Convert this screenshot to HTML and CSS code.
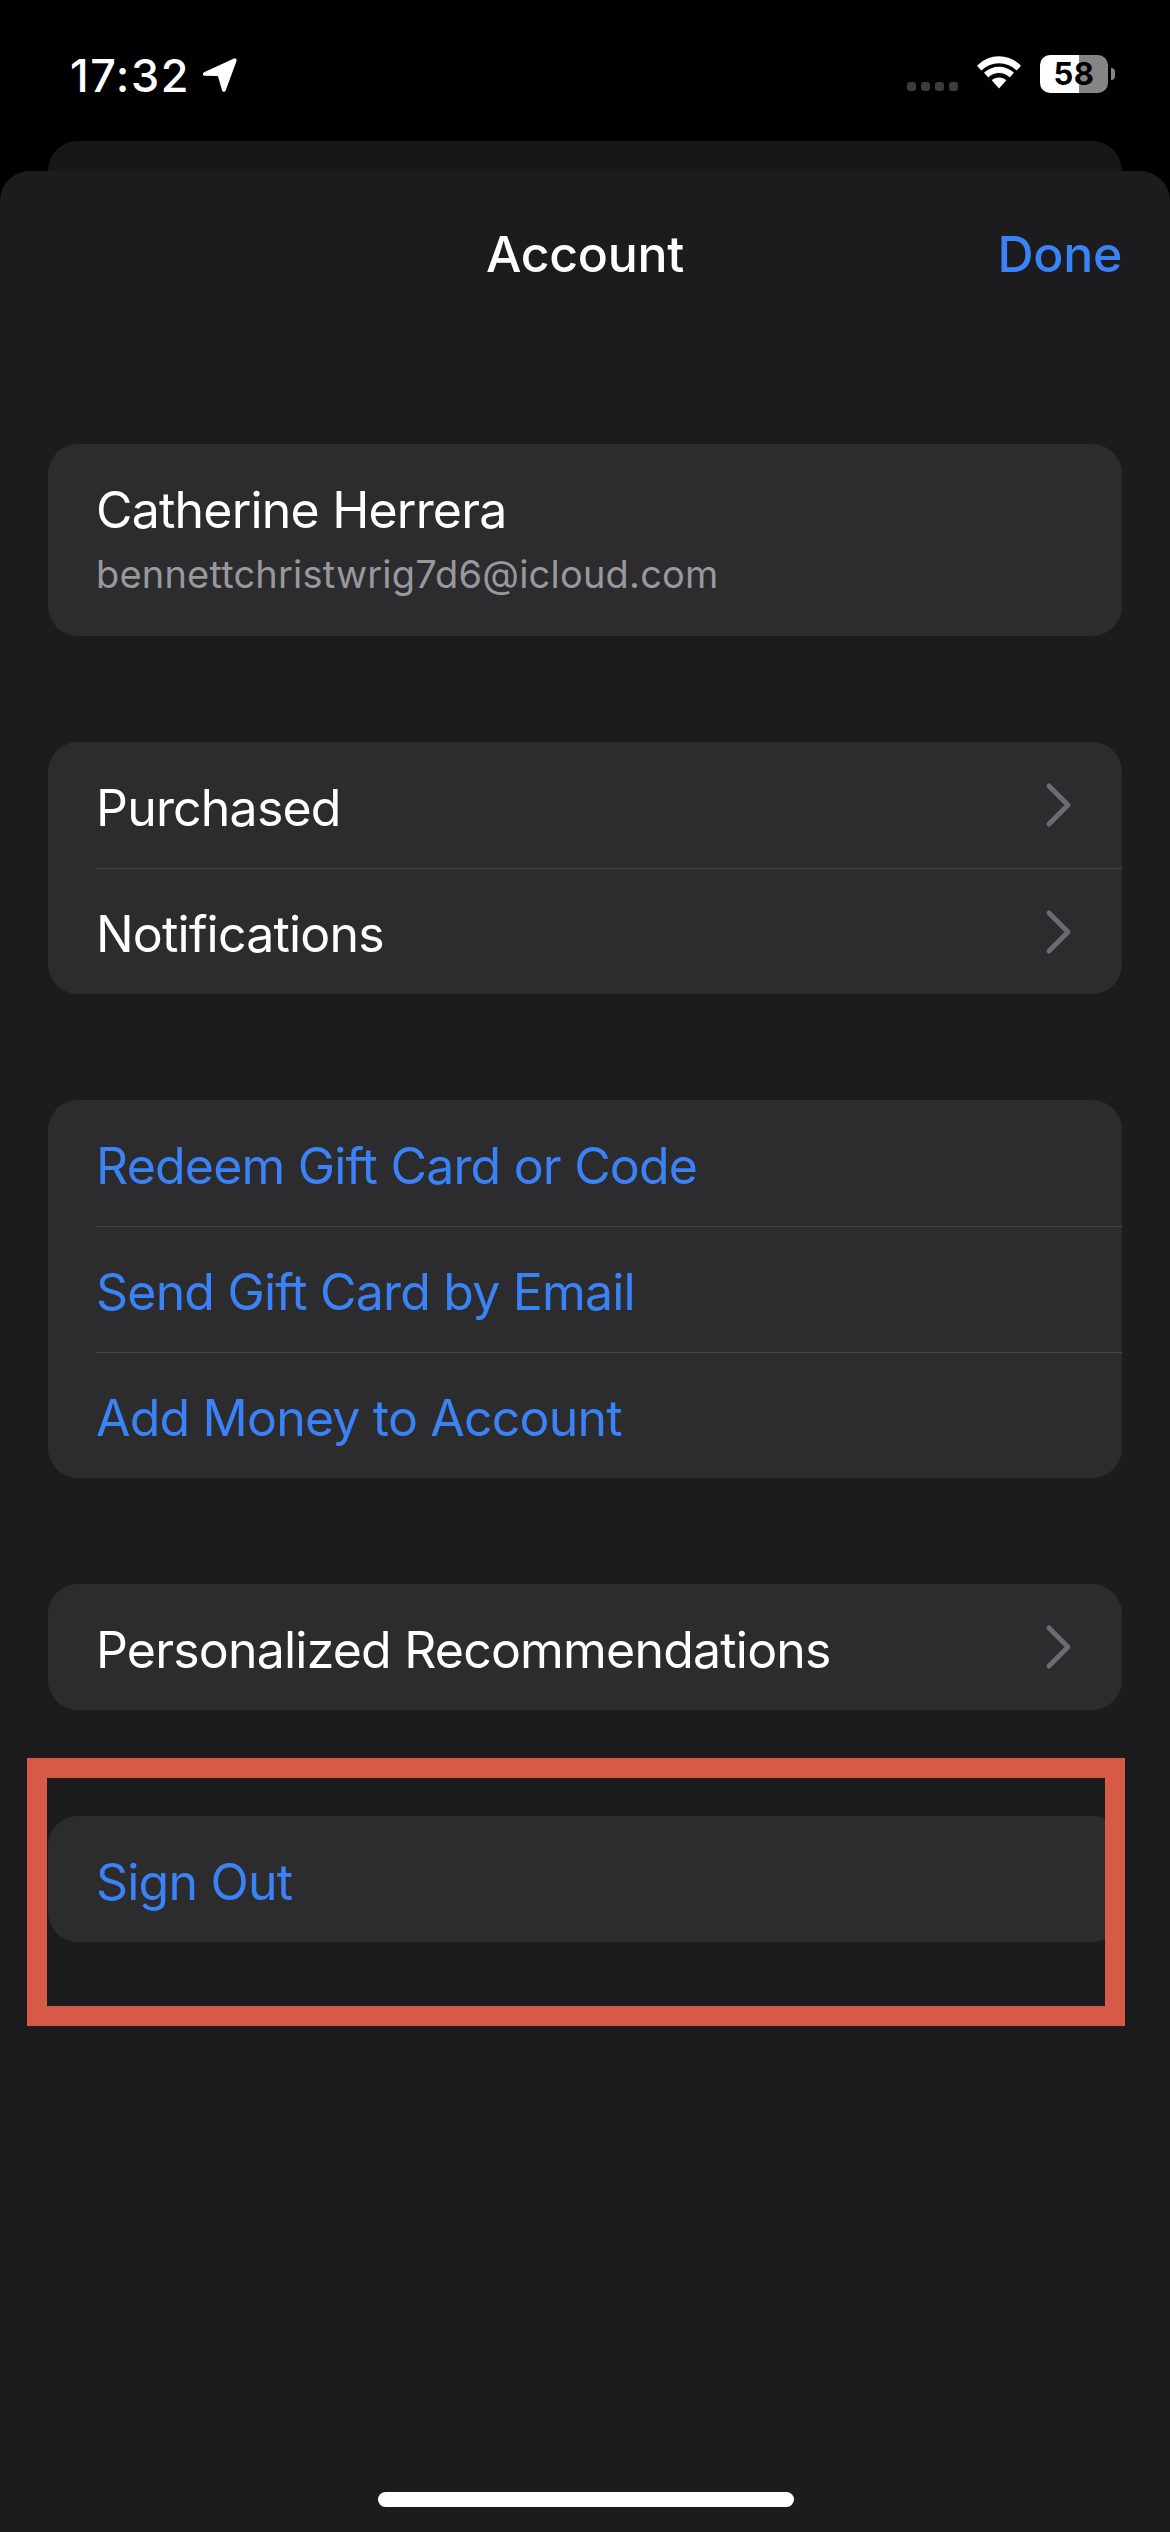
FILE: index.html
```html
<!DOCTYPE html>
<html lang="en">
<head>
<meta charset="utf-8">
<title>Account</title>
<link rel="stylesheet" href="styles.css">
</head>
<body>
<div class="status">
  <div class="status-left">
    <span class="time">17:32</span>
    <svg class="loc" viewBox="0 0 36 36"><path d="M33 1.500 3 15.200c-1.800.9-1.300 3.400.7 3.500l12.400.4c.6 0 1 .4 1.100 1l3.800 13.200c.5 1.900 3 2 3.700.2L35.500 4c.6-1.700-.9-3.200-2.500-2.500z" fill="#fff"/></svg>
  </div>
  <div class="status-right">
    <div class="dots"><i></i><i></i><i></i><i></i></div>
    <svg class="wifi" viewBox="0 0 48 36"><path d="M24 7.500c6.800 0 13 2.700 17.600 7l3.400-3.800C39.500 5.400 32.100 2 24 2S8.500 5.400 3 10.700l3.400 3.800c4.600-4.300 10.800-7 17.600-7z" fill="#fff" stroke="#fff" stroke-width="1.500" stroke-linejoin="round"/><path d="M24 17.500c4.100 0 7.800 1.500 10.700 4.100l3.400-3.800C34.300 14.400 29.400 12.300 24 12.300s-10.300 2.100-14.100 5.500l3.400 3.800c2.900-2.600 6.600-4.100 10.700-4.100z" fill="#fff" stroke="#fff" stroke-width="1.200" stroke-linejoin="round"/><path d="M24 22.500c-2.800 0-5.300 1-7.300 2.700L24 33.500l7.300-8.300c-2-1.700-4.500-2.700-7.300-2.700z" fill="#fff"/></svg>
    <div class="battery">
      <div class="batt-body"><span class="batt-num">58</span></div>
      <div class="batt-tip"></div>
    </div>
  </div>
</div>
<div class="back-card"></div>
<main class="sheet">
  <header class="nav">
    <h1 class="nav-title">Account</h1>
    <span class="nav-done">Done</span>
  </header>

  <section class="card card-profile">
    <div class="name">Catherine Herrera</div>
    <div class="email">bennettchristwrig7d6@icloud.com</div>
  </section>

  <section class="card">
    <div class="row"><span class="label">Purchased</span>
      <svg class="chev" viewBox="0 0 28 48"><path d="M4 5l19 19L4 43" /></svg></div>
    <div class="row"><span class="label">Notifications</span>
      <svg class="chev" viewBox="0 0 28 48"><path d="M4 5l19 19L4 43" /></svg></div>
  </section>

  <section class="card">
    <div class="row"><span class="label link">Redeem Gift Card or Code</span></div>
    <div class="row"><span class="label link">Send Gift Card by Email</span></div>
    <div class="row"><span class="label link">Add Money to Account</span></div>
  </section>

  <section class="card">
    <div class="row"><span class="label">Personalized Recommendations</span>
      <svg class="chev" viewBox="0 0 28 48"><path d="M4 5l19 19L4 43" /></svg></div>
  </section>

  <section class="card card-signout">
    <div class="row"><span class="label link">Sign Out</span></div>
  </section>

  <div class="highlight"></div>
  <div class="home-bar"></div>
</main>
</body>
</html>
```
FILE: styles.css
```css
* { box-sizing: border-box; }
html, body { margin: 0; padding: 0; }
body {
  width: 1170px;
  height: 2532px;
  background: #000;
  font-family: Inter, "Noto Sans", sans-serif;
  color: #fff;
  display: flex;
  flex-direction: column;
  overflow: hidden;
}
.status {
  height: 141px;
  flex: none;
  display: flex;
  justify-content: space-between;
  padding: 52px 55px 0 70px;
}
.status-left { display: flex; align-items: flex-start; gap: 11px; }
.time { font-size: 45px; line-height: 47px; font-weight: 500; letter-spacing: 1.500px; }
.loc { width: 36px; height: 36px; margin-top: 5px; }
.status-right { display: flex; align-items: flex-start; }
.dots { display: flex; gap: 5px; margin-top: 30px; margin-right: 17px; }
.dots i { width: 9px; height: 9px; border-radius: 3px; background: #3c3c3c; }
.wifi { width: 48px; height: 36px; margin-top: 3px; margin-right: 17px; }
.battery { display: flex; align-items: center; margin-top: 3px; }
.batt-body {
  width: 68px;
  height: 38px;
  border-radius: 10px;
  background: linear-gradient(90deg, #fff 0, #fff 57.500%, #858585 57.500%, #858585 100%);
  display: flex;
  align-items: center;
  justify-content: center;
}
.batt-num { font-size: 31px; line-height: 38px; font-weight: 700; color: #000; letter-spacing: 0.500px; }
.batt-tip { width: 4px; height: 12px; margin-left: 3px; border-radius: 0 6px 6px 0; background: #858585; }

.back-card {
  flex: none;
  height: 30px;
  margin: 0 48px;
  background: #171718;
  border-radius: 30px 30px 0 0;
}
.sheet {
  flex: 1;
  position: relative;
  background: #1c1c1e;
  border-radius: 30px 30px 0 0;
  padding: 0 48px;
  display: flex;
  flex-direction: column;
}
.nav {
  height: 273px;
  flex: none;
  position: relative;
  display: flex;
  justify-content: center;
  padding-top: 53px;
}
.nav-title { margin: 0; font-size: 50px; line-height: 60px; font-weight: 500; letter-spacing: -0.300px; }
.nav-done {
  position: absolute;
  right: 0;
  top: 53px;
  font-size: 50px;
  line-height: 60px;
  font-weight: 500;
  letter-spacing: -0.300px;
  color: #3b82f6;
}
.card {
  background: #2c2c2e;
  border-radius: 30px;
  margin-bottom: 106px;
  overflow: hidden;
}
.card-profile { height: 192px; padding: 36px 48px 0; }
.name { font-size: 50px; line-height: 60px; letter-spacing: -0.800px; }
.email { font-size: 38px; line-height: 46px; margin-top: 11px; color: #98989e; letter-spacing: 0.200px; }
.row {
  height: 126px;
  display: flex;
  align-items: center;
  justify-content: space-between;
  margin-left: 48px;
  padding-right: 49px;
}
.row + .row { border-top: 1px solid #444446; }
.label { font-size: 50px; line-height: 60px; letter-spacing: -0.800px; padding-top: 5px; }
.link { color: #3b82f6; }
.chev { width: 28px; height: 48px; fill: none; stroke: #6c6c70; stroke-width: 5; stroke-linecap: round; stroke-linejoin: round; }
.highlight {
  position: absolute;
  left: 27px;
  top: 1587px;
  width: 1098px;
  height: 268px;
  border: 20px solid #d75a46;
}
.home-bar {
  position: absolute;
  left: 378px;
  top: 2321px;
  width: 416px;
  height: 15px;
  border-radius: 8px;
  background: #fff;
}
```
